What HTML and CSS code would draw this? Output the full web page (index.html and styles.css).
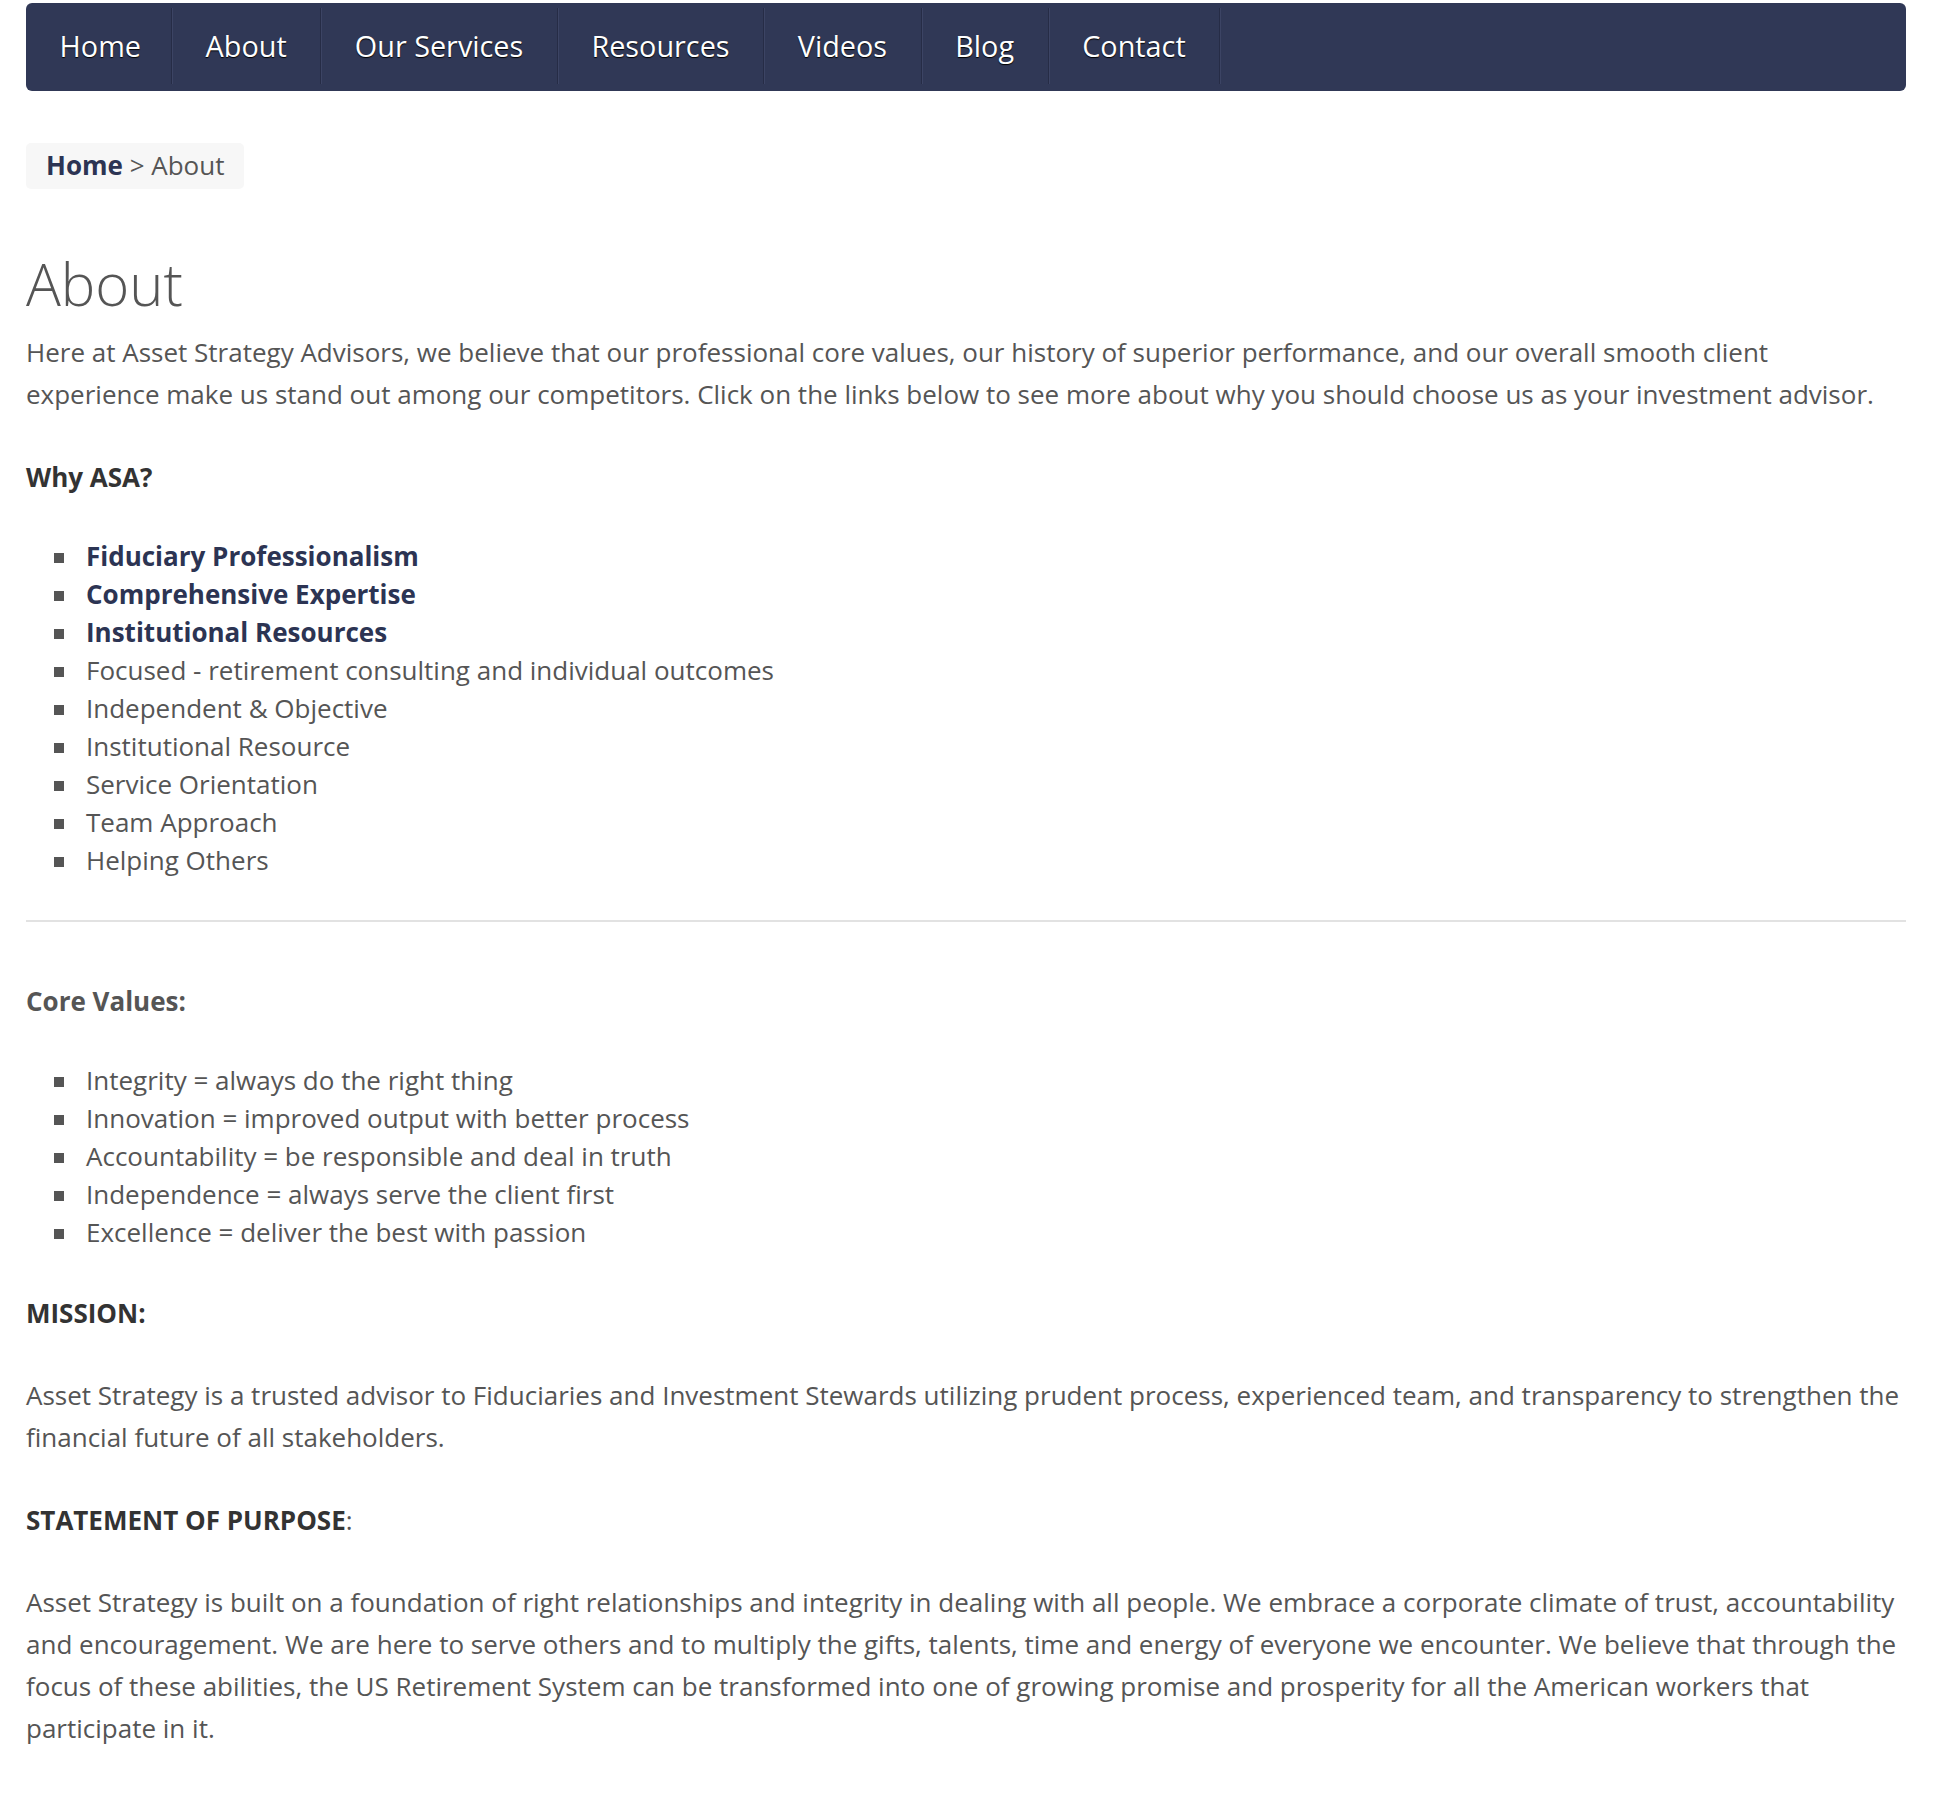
FILE: index.html
```html
<!DOCTYPE html>
<html lang="en">
<head>
  <meta charset="UTF-8" />
  <meta name="viewport" content="width=device-width, initial-scale=1" />
  <title>About - Asset Strategy Advisors</title>
  <link rel="stylesheet" href="styles.css">
</head>
<body>

  <div class="page">
    <nav class="main-nav">
      <ul>
        <li><a href="#">Home</a></li>
        <li><a href="#">About</a></li>
        <li><a href="#">Our Services</a></li>
        <li><a href="#">Resources</a></li>
        <li><a href="#">Videos</a></li>
        <li><a href="#">Blog</a></li>
        <li><a href="#">Contact</a></li>
      </ul>
    </nav>

    <div class="breadcrumb"><a href="#">Home</a> &gt; About</div>

    <h1>About</h1>
    <p>Here at Asset Strategy Advisors, we believe that our professional core values, our history of superior performance, and our overall smooth client experience make us stand out among our competitors. Click on the links below to see more about why you should choose us as your investment advisor.</p>

    <p class="label"><strong>Why ASA?</strong></p>
    <ul class="square-list">
      <li><a href="#">Fiduciary Professionalism</a></li>
      <li><a href="#">Comprehensive Expertise</a></li>
      <li><a href="#">Institutional Resources</a></li>
      <li>Focused - retirement consulting and individual outcomes</li>
      <li>Independent &amp; Objective</li>
      <li>Institutional Resource</li>
      <li>Service Orientation</li>
      <li>Team Approach</li>
      <li>Helping Others</li>
    </ul>

    <hr>

    <p class="label muted"><strong>Core Values:</strong></p>
    <ul class="square-list">
      <li>Integrity = always do the right thing</li>
      <li>Innovation = improved output with better process</li>
      <li>Accountability = be responsible and deal in truth</li>
      <li>Independence = always serve the client first</li>
      <li>Excellence = deliver the best with passion</li>
    </ul>

    <p class="label"><strong>MISSION:</strong></p>
    <p>Asset Strategy is a trusted advisor to Fiduciaries and Investment Stewards utilizing prudent process, experienced team, and transparency to strengthen the financial future of all stakeholders.</p>

    <p class="label"><strong>STATEMENT OF PURPOSE</strong>:</p>
    <p>Asset Strategy is built on a foundation of right relationships and integrity in dealing with all people. We embrace a corporate climate of trust, accountability and encouragement. We are here to serve others and to multiply the gifts, talents, time and energy of everyone we encounter. We believe that through the focus of these abilities, the US Retirement System can be transformed into one of growing promise and prosperity for all the American workers that participate in it.</p>
  </div>

</body>
</html>
```

FILE: styles.css
```css
:root {
  --navy: #303856;
  --link: #2c3453;
  --text: #555;
  --dark: #333;
  --font-family: 'Open Sans', 'Liberation Sans', sans-serif;
}

body {
  margin: 0;
  background-color: #fff;
  color: var(--text);
  font-family: var(--font-family);
  font-size: 26px;
}

.page {
  width: 1880px;
  margin: 3px 0 40px 26px;
}

/* top navigation */
.main-nav {
  background-color: var(--navy);
  border-radius: 6px;
  height: 88px;
  box-sizing: border-box;
  padding: 5px 0 7px;
  margin-bottom: 52px;
}

.main-nav ul {
  display: flex;
  list-style: none;
  margin: 0;
  padding: 0;
  height: 100%;
}

.main-nav li {
  border-right: 1px solid #262c46;
  box-shadow: 1px 0 0 #3c4464;
}

.main-nav a {
  display: block;
  padding: 0 33.6px;
  line-height: 76px;
  font-size: 28.8px;
  color: #fff;
  text-decoration: none;
  text-shadow: 0 1px 1px #000;
}

.main-nav li:first-child a {
  padding-right: 30px;
}

/* breadcrumb */
.breadcrumb {
  width: fit-content;
  background-color: #f7f7f7;
  border-radius: 5px;
  padding: 7px 20px 9px;
  line-height: 30px;
  margin-bottom: 63px;
}

.breadcrumb a {
  color: var(--link);
  font-weight: bold;
  text-decoration: none;
}

h1 {
  font-size: 58px;
  font-weight: 300;
  line-height: 1.1;
  margin: 0 0 15px;
  color: var(--text);
}

p {
  line-height: 42px;
  margin: 0 0 41px;
}

.label {
  margin-bottom: 0;
}

.label strong {
  color: var(--dark);
}

.label.muted strong {
  color: var(--text);
}

p.label + p {
  margin-top: 40px;
}

/* square bullet lists */
.square-list {
  list-style: none;
  margin: 0 0 41px;
  padding-left: 60px;
  line-height: 38px;
}

.label + .square-list {
  margin-top: 39px;
}

.square-list li::before {
  content: "";
  display: inline-block;
  width: 10px;
  height: 10px;
  background-color: var(--text);
  margin-left: -32px;
  margin-right: 22px;
  vertical-align: 3px;
}

.square-list a {
  color: var(--link);
  font-weight: bold;
  text-decoration: none;
}

hr {
  border: none;
  border-top: 2px solid #e2e2e2;
  margin: 37px 0 58px;
}
```
